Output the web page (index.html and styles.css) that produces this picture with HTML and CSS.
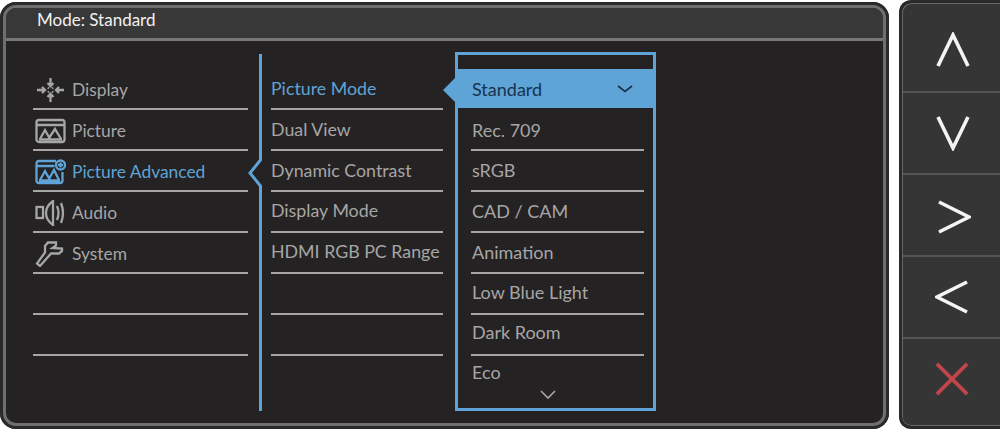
FILE: index.html
```html
<!DOCTYPE html>
<html lang="en">
<head>
<meta charset="utf-8">
<title>Monitor OSD</title>
<link rel="stylesheet" href="styles.css">
</head>
<body>
<main class="osd">
  <header class="osd-head">Mode: Standard</header>
  <div class="osd-body">
    <ul class="col col-main">
      <li class="row"><svg class="ico" viewBox="0 0 31 26"><path d="M2 13h8M7 10l3 3-3 3M29 13h-8M24 10l-3 3 3 3M15.500 1v8M12.500 6l3 3 3-3M15.500 25v-8M12.500 20l3-3 3 3"/><path d="M13 10.500l1 1M18 10.500l-1 1M13 15.500l1-1M18 15.500l-1-1"/></svg>Display</li>
      <li class="row"><svg class="ico" viewBox="0 0 31 26"><rect x="1.500" y="2" width="28" height="22" rx="2.500"/><path d="M1.500 7h28M4 21.500h23M5 21l5-9 5 9M14 20l6-9 6 10"/></svg>Picture</li>
      <li class="row is-active"><svg class="ico" viewBox="0 0 31 26"><path d="M21 2H4Q1.500 2 1.500 4.500v17Q1.500 24 4 24h21q2.500 0 2.500-2.500V13M1.500 7h18M4 21.500h21M5 21l5-9 5 9M14 20l5-9 5 10"/><circle cx="25.500" cy="6" r="4.500"/><path d="M25.500 3.500v5M23 6h5"/></svg>Picture Advanced</li>
      <li class="row"><svg class="ico" viewBox="0 0 31 26"><rect x="1.500" y="7" width="6.500" height="11"/><path d="M18 1Q11 6 11 13T18 25zM22 6q3 7 0 14M26 3q4 10 0 20"/></svg>Audio</li>
      <li class="row"><svg class="ico" viewBox="0 0 31 26"><path d="M13 1.500h8v3L17.500 7 27 7.500V10l-3 2.500h-8L5 25l-3-2.500 8-11V5z"/></svg>System</li>
      <li class="row"></li>
      <li class="row"></li>
    </ul>
    <svg class="rail" viewBox="0 0 23 357"><path d="M12.500 0V106L2 119 12.500 132V357"/></svg>
    <ul class="col col-sub">
      <li class="row is-active">Picture Mode</li>
      <li class="row">Dual View</li>
      <li class="row">Dynamic Contrast</li>
      <li class="row">Display Mode</li>
      <li class="row">HDMI RGB PC Range</li>
      <li class="row"></li>
      <li class="row"></li>
    </ul>
    <div class="picker">
      <ul class="col col-opts">
        <li class="row is-selected">Standard<svg class="tick" viewBox="0 0 16 8"><path d="M1 1l7 5.500L15 1"/></svg></li>
        <li class="row">Rec. 709</li>
        <li class="row">sRGB</li>
        <li class="row">CAD / CAM</li>
        <li class="row">Animation</li>
        <li class="row">Low Blue Light</li>
        <li class="row">Dark Room</li>
        <li class="row row-last">Eco</li>
      </ul>
      <svg class="more" viewBox="0 0 16 10"><path d="M1 1l7 7 7-7"/></svg>
    </div>
  </div>
</main>
<nav class="keys">
  <div class="key key-up"><svg viewBox="0 0 34 36"><path d="M2 34L17 3l15 31"/></svg></div>
  <div class="key key-down"><svg viewBox="0 0 34 36"><path d="M2 2l15 31L32 2"/></svg></div>
  <div class="key key-right"><svg viewBox="0 0 34 36"><path d="M2 3l30 15L2 33"/></svg></div>
  <div class="key"><svg viewBox="0 0 34 36"><path d="M32 3L2 18l30 15"/></svg></div>
  <div class="key key-close"><svg viewBox="0 0 36 36"><path d="M2 2l32 32M34 2L2 34"/></svg></div>
</nav>
</body>
</html>
```
FILE: styles.css
```css
* { box-sizing: border-box; }
html, body { margin: 0; padding: 0; }
body {
  width: 1000px;
  height: 430px;
  overflow: hidden;
  background: #fff;
  display: flex;
  gap: 10px;
  font-family: Lato, "Liberation Sans", sans-serif;
}
ul { list-style: none; margin: 0; padding: 0; }

.osd {
  width: 889px;
  height: 427px;
  margin-top: 2px;
  background: #252223;
  border-radius: 16px;
  box-shadow: inset 0 0 0 3px #2a2a2a, inset 0 0 0 6px #6f6f6f;
  display: flex;
  flex-direction: column;
  padding: 6px;
}
.osd-head {
  height: 33px;
  flex: none;
  background: #383838;
  border-radius: 10px 10px 0 0;
  border-bottom: 3px solid #777;
  color: #f2f2f2;
  font-size: 17px;
  line-height: 24px;
  padding-left: 31px;
}
.osd-body {
  flex: 1;
  display: flex;
  align-items: flex-start;
  padding: 13px 0 0 27px;
}

.col { display: flex; flex-direction: column; }
.col-main { width: 215px; margin-top: 15px; }
.col-sub { width: 172px; margin-top: 15px; }
.row {
  height: 41px;
  flex: none;
  display: flex;
  align-items: center;
  gap: 6px;
  border-bottom: 2px solid #a6a6a6;
  color: #a6a6a6;
  font-size: 18px;
  white-space: nowrap;
}
.col-main .row { padding: 2px 0 0 2px; font-size: 17.400px; }
.col-sub .row { padding-bottom: 1px; font-size: 17.800px; }
.col-sub .row:nth-child(n+4) { padding-bottom: 3px; }
.row.is-active { color: #5fa4d6; }

.ico {
  width: 31px;
  height: 26px;
  flex: none;
  fill: none;
  stroke: currentColor;
  stroke-width: 2.300;
}
.rail {
  width: 23px;
  height: 357px;
  flex: none;
  fill: none;
  stroke: #5fa4d6;
  stroke-width: 3;
}
.picker {
  position: relative;
  width: 201px;
  height: 359px;
  flex: none;
  margin: -2px 0 0 12px;
  border: 3px solid #5fa4d6;
  padding-top: 14px;
}
.col-opts { width: 195px; padding-left: 13px; }
.col-opts .row { width: 173px; padding-left: 1px; }
.col-opts .row:nth-child(n+3) { padding-bottom: 2px; }
.col-opts .row:nth-child(n+6) { padding-bottom: 4px; }
.col-opts .row:nth-child(n+7) { padding-bottom: 6px; }
.col-opts .row:nth-child(n+8) { padding-bottom: 10px; }
.row.is-selected {
  position: relative;
  justify-content: space-between;
  color: #17324f;
  border-bottom-color: transparent;
  padding-right: 11px;
  z-index: 0;
}
.row.is-selected::before {
  content: "";
  position: absolute;
  z-index: -1;
  left: -28px;
  right: -11px;
  top: 0;
  bottom: 0;
  background: #5fa4d6;
  clip-path: polygon(12px 0, 100% 0, 100% 100%, 12px 100%, 12px 33px, 0 21px, 12px 9px);
}
.row-last { border-bottom: 0; }
.tick, .more {
  flex: none;
  fill: none;
  stroke-width: 1.600;
}
.tick { width: 16px; height: 8px; stroke: #17324f; }
.more {
  position: absolute;
  left: 82px;
  bottom: 8px;
  width: 16px;
  height: 10px;
  stroke: #a6a6a6;
}

.keys {
  width: 101px;
  height: 429px;
  background: #353535;
  border: 3px solid #2a2a2a;
  border-right: 0;
  border-radius: 12px 0 0 12px;
  box-shadow: inset 1px 1px 0 #666, inset 0 -1px 0 #666;
  display: flex;
  flex-direction: column;
  padding: 8px 0 2px 1px;
}
.key {
  height: 82px;
  flex: none;
  display: flex;
  align-items: center;
  justify-content: center;
  border-bottom: 2px solid #555;
}
.key-up { padding: 0 0 3px 2px; }
.key-down { padding-left: 2px; }
.key-right { padding: 3px 0 0 5px; }
.key-close { flex: 1; border-bottom: 0; padding-bottom: 5px; }
.key svg {
  width: 34px;
  height: 36px;
  fill: none;
  stroke: #f4f4f4;
  stroke-width: 3.600;
}
.key-close svg { stroke: #c2454b; stroke-width: 3.800; }
```
